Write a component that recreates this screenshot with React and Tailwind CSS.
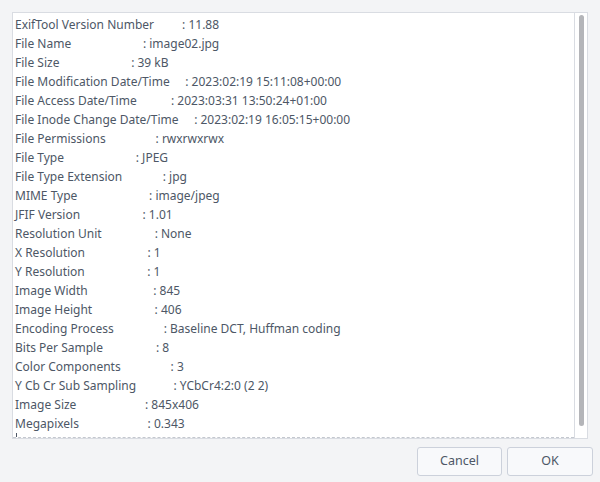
import React from 'react'

const rows = [
  ['ExifTool Version Number', '11.88'],
  ['File Name', 'image02.jpg'],
  ['File Size', '39 kB'],
  ['File Modification Date/Time', '2023:02:19 15:11:08+00:00'],
  ['File Access Date/Time', '2023:03:31 13:50:24+01:00'],
  ['File Inode Change Date/Time', '2023:02:19 16:05:15+00:00'],
  ['File Permissions', 'rwxrwxrwx'],
  ['File Type', 'JPEG'],
  ['File Type Extension', 'jpg'],
  ['MIME Type', 'image/jpeg'],
  ['JFIF Version', '1.01'],
  ['Resolution Unit', 'None'],
  ['X Resolution', '1'],
  ['Y Resolution', '1'],
  ['Image Width', '845'],
  ['Image Height', '406'],
  ['Encoding Process', 'Baseline DCT, Huffman coding'],
  ['Bits Per Sample', '8'],
  ['Color Components', '3'],
  ['Y Cb Cr Sub Sampling', 'YCbCr4:2:0 (2 2)'],
  ['Image Size', '845x406'],
  ['Megapixels', '0.343'],
]

export default function App() {
  return (
    <div className="w-[600px] h-[482px] bg-[#f3f4f6] flex flex-col px-3 pt-3 pb-[7px] font-['Noto_Sans',sans-serif] text-[#4d5766]">
      {/* output box */}
      <div className="h-[427px] flex border border-[#d9dce2] bg-white">
        <div className="flex-1 flex flex-col pl-[2px] pt-[2px] border-b border-dashed border-[#c4c8cf]">
          {rows.map(([label, value], i) => (
            <div key={i} className="h-[19.1px] leading-[19px] text-[12px] whitespace-pre">
              {label.padEnd(32, ' ') + ': ' + value}
            </div>
          ))}
          <div className="mt-auto ml-px w-px h-[4px] bg-[#4d5766]" />
        </div>
        <div className="w-[13px] border-l border-[#d9dce2] flex justify-center pt-[2px] pb-[12px]">
          <div className="w-[5px] h-full rounded-full bg-[#b4b5b9]" />
        </div>
      </div>
      {/* buttons */}
      <div className="flex justify-end gap-[5px] mt-[8px] pr-[-5px] mr-[-5px]">
        <button className="w-[85px] h-[29px] rounded-[3px] border border-[#ccd1db] bg-[#f8f9fb] text-[12.5px] text-[#4d5766]">Cancel</button>
        <button className="w-[86px] h-[29px] rounded-[3px] border border-[#ccd1db] bg-[#f8f9fb] text-[12.5px] text-[#4d5766]">OK</button>
      </div>
    </div>
  )
}
